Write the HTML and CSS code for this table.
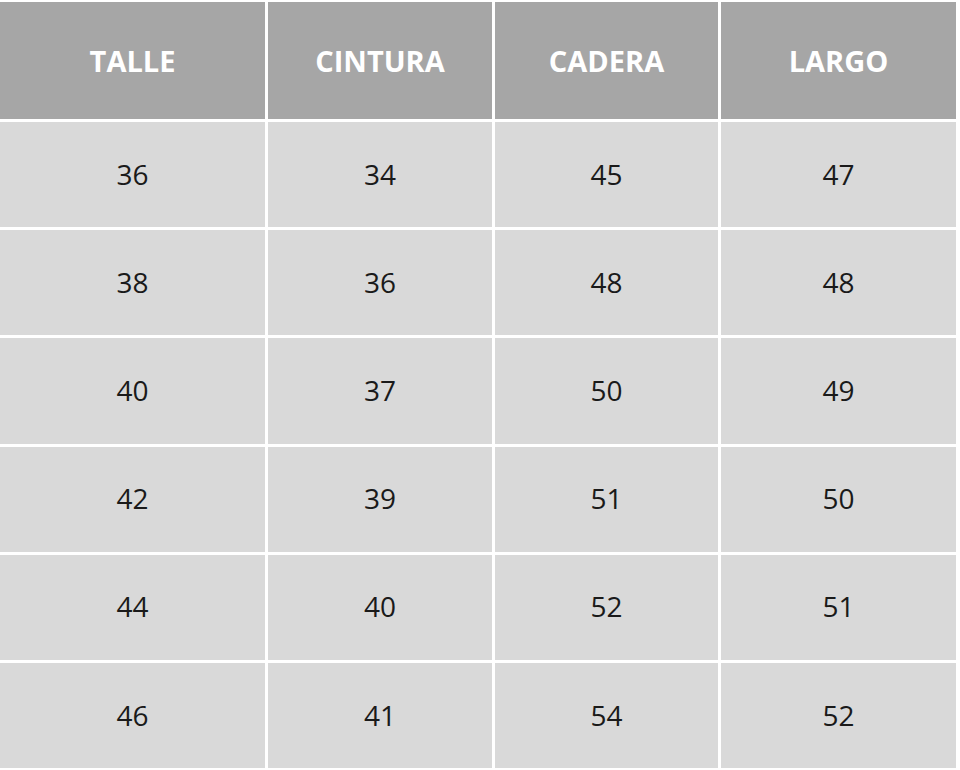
FILE: index.html
```html
<!DOCTYPE html>
<html lang="es">
<head>
<meta charset="utf-8">
<title>Tabla de talles</title>
<link rel="stylesheet" href="styles.css">
</head>
<body>
<div class="size-table">
  <div class="cell head">TALLE</div>
  <div class="cell head">CINTURA</div>
  <div class="cell head">CADERA</div>
  <div class="cell head">LARGO</div>

  <div class="cell">36</div><div class="cell">34</div><div class="cell">45</div><div class="cell">47</div>
  <div class="cell">38</div><div class="cell">36</div><div class="cell">48</div><div class="cell">48</div>
  <div class="cell">40</div><div class="cell">37</div><div class="cell">50</div><div class="cell">49</div>
  <div class="cell">42</div><div class="cell">39</div><div class="cell">51</div><div class="cell">50</div>
  <div class="cell">44</div><div class="cell">40</div><div class="cell">52</div><div class="cell">51</div>
  <div class="cell">46</div><div class="cell">41</div><div class="cell">54</div><div class="cell">52</div>
</div>
</body>
</html>
```
FILE: styles.css
```css
html, body {
  margin: 0;
  padding: 0;
  background: #ffffff;
}

body {
  padding-top: 2px;
  font-family: "Open Sans", "Noto Sans", sans-serif;
}

.size-table {
  width: 956px;
  display: grid;
  grid-template-columns: 265px 224px 223px 235px;
  grid-template-rows: 117px repeat(6, 105.2px);
  gap: 3px;
}

.cell {
  display: flex;
  align-items: center;
  justify-content: center;
  background: #d9d9d9;
  color: #1a1a1a;
  font-size: 28px;
  font-weight: 400;
  padding-bottom: 2px;
}

.cell.head {
  background: #a6a6a6;
  color: #ffffff;
  font-weight: 700;
  font-size: 29px;
  padding-bottom: 1px;
}
```
